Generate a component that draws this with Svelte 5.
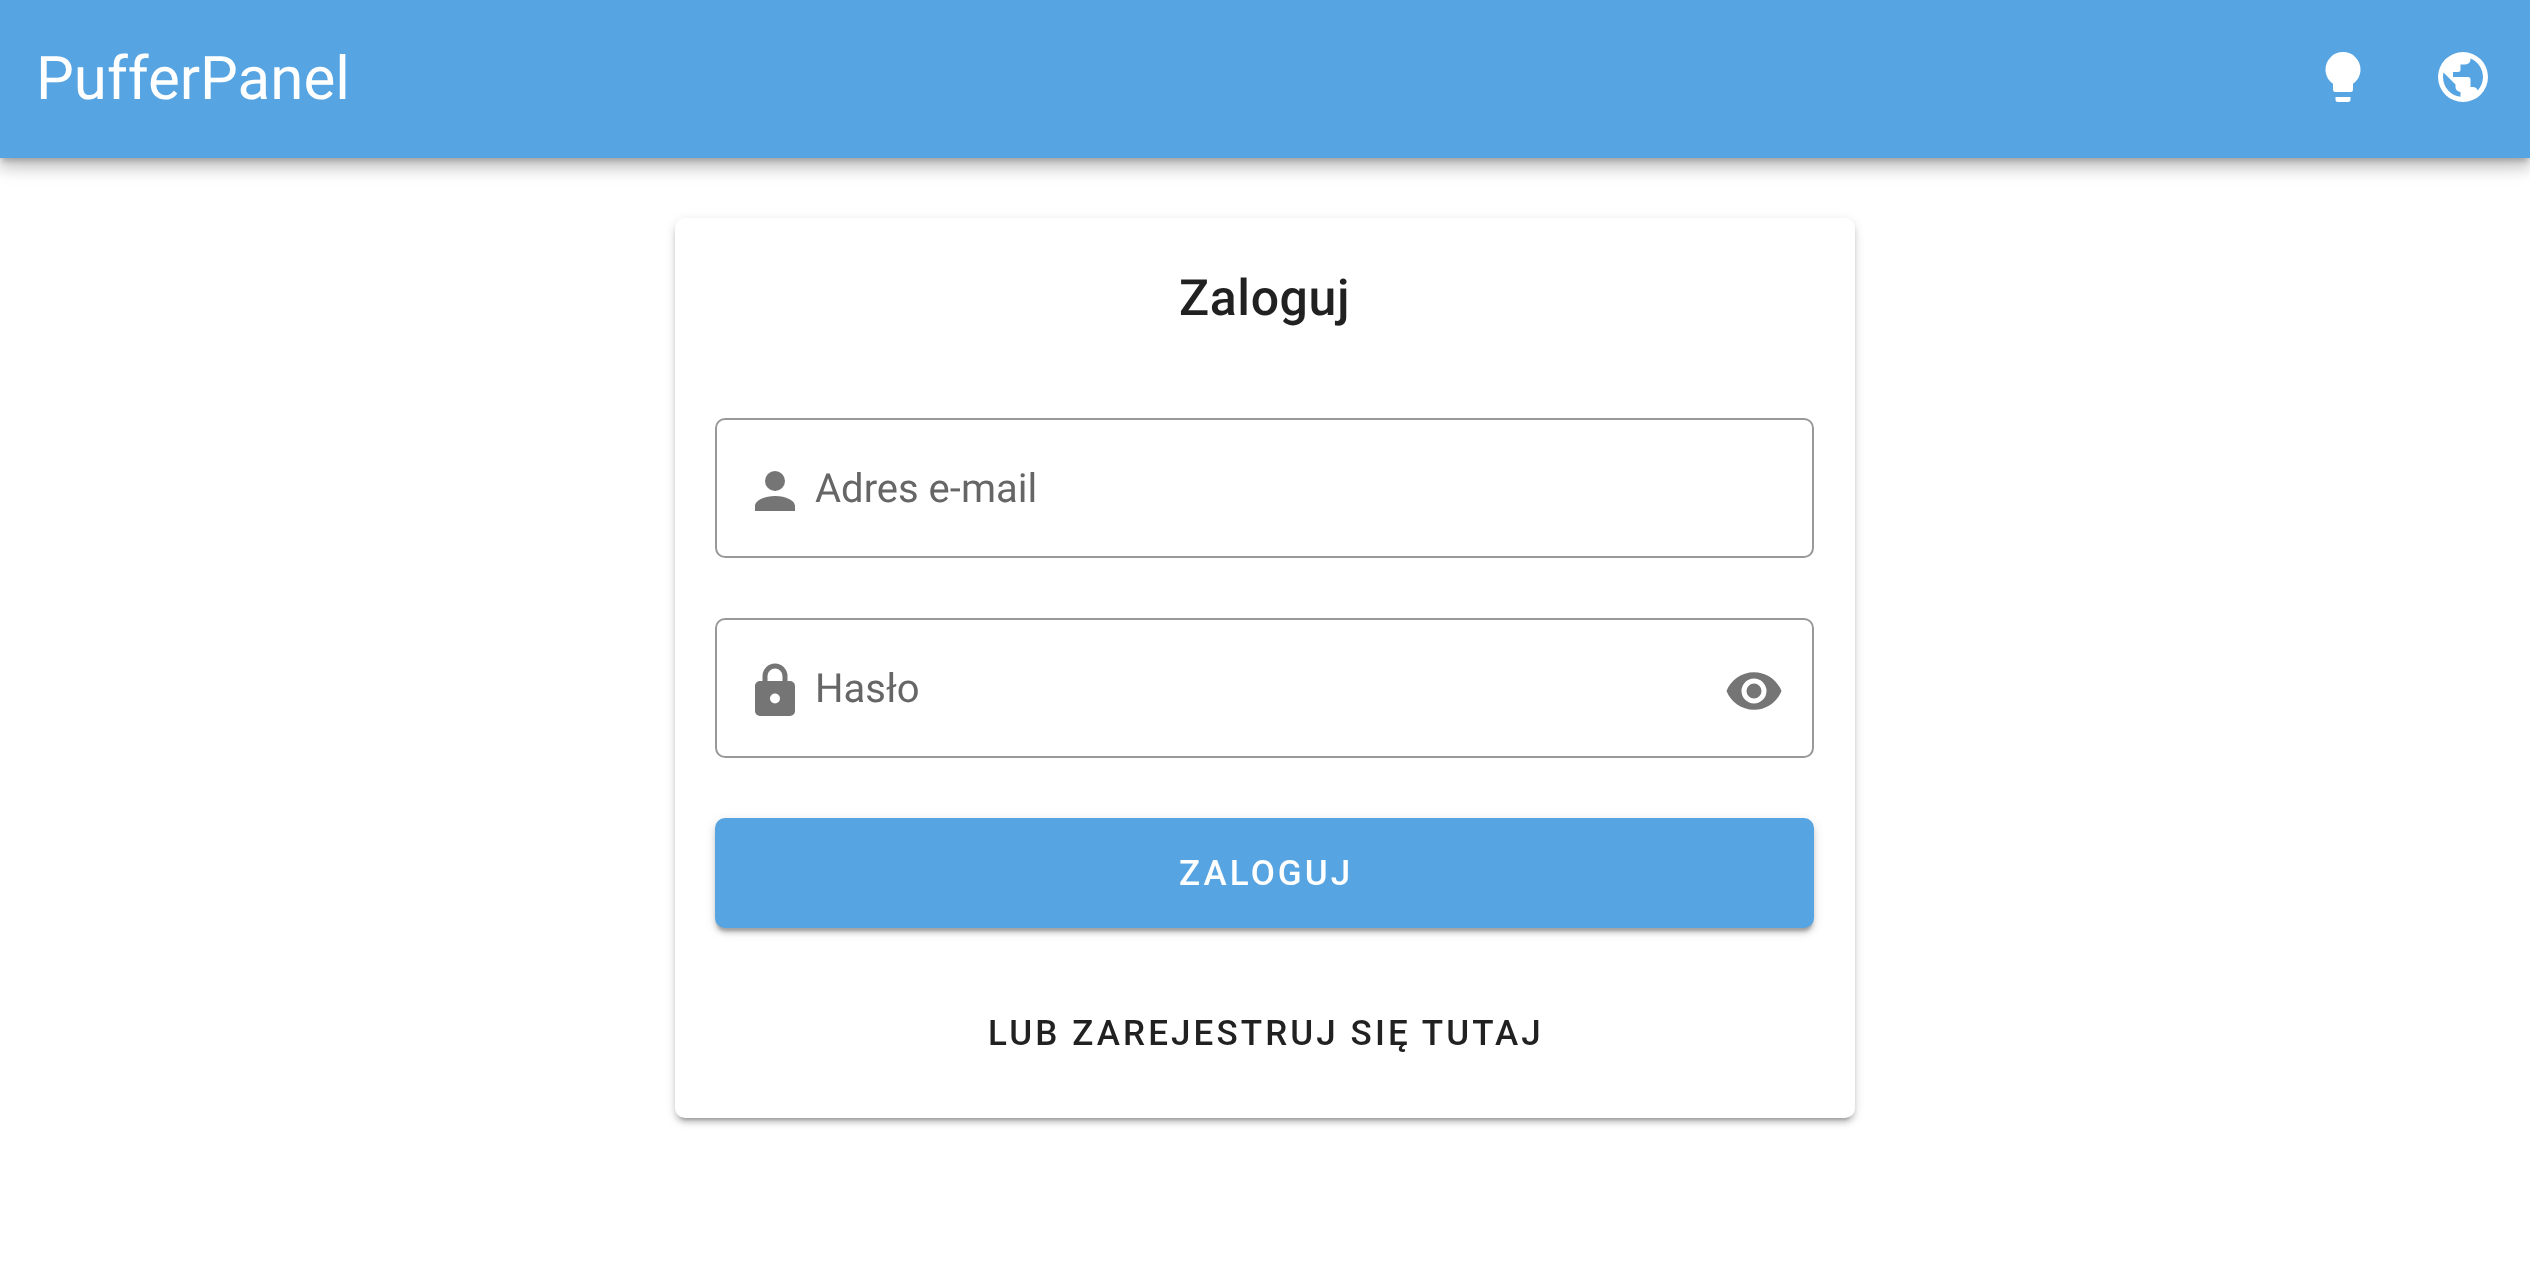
<script>
  const icons = {
    bulb: "M12,2A7,7 0 0,0 5,9C5,11.38 6.19,13.47 8,14.74V17A1,1 0 0,0 9,18H15A1,1 0 0,0 16,17V14.74C17.81,13.47 19,11.38 19,9A7,7 0 0,0 12,2M9,21A1,1 0 0,0 10,22H14A1,1 0 0,0 15,21V20H9V21Z",
    earth: "M17.9,17.39C17.64,16.59 16.89,16 16,16H15V13A1,1 0 0,0 14,12H8V10H10A1,1 0 0,0 11,9V7H13A2,2 0 0,0 15,5V4.59C17.93,5.77 20,8.64 20,12C20,14.08 19.2,15.97 17.9,17.39M11,19.93C7.05,19.44 4,16.08 4,12C4,11.38 4.08,10.78 4.21,10.21L9,15V16A2,2 0 0,0 11,18M12,2A10,10 0 0,0 2,12A10,10 0 0,0 12,22A10,10 0 0,0 22,12A10,10 0 0,0 12,2Z",
    account: "M12,4A4,4 0 0,1 16,8A4,4 0 0,1 12,12A4,4 0 0,1 8,8A4,4 0 0,1 12,4M12,14C16.42,14 20,15.79 20,18V20H4V18C4,15.79 7.58,14 12,14Z",
    lock: "M12,17A2,2 0 0,0 14,15C14,13.89 13.1,13 12,13A2,2 0 0,0 10,15A2,2 0 0,0 12,17M18,8A2,2 0 0,1 20,10V20A2,2 0 0,1 18,22H6A2,2 0 0,1 4,20V10C4,8.89 4.9,8 6,8H7V6A5,5 0 0,1 12,1A5,5 0 0,1 17,6V8H18M12,3A3,3 0 0,0 9,6V8H15V6A3,3 0 0,0 12,3Z",
    eye: "M12,9A3,3 0 0,0 9,12A3,3 0 0,0 12,15A3,3 0 0,0 15,12A3,3 0 0,0 12,9M12,17A5,5 0 0,1 7,12A5,5 0 0,1 12,7A5,5 0 0,1 17,12A5,5 0 0,1 12,17M12,4.5C7,4.5 2.73,7.61 1,12C2.73,16.39 7,19.5 12,19.5C17,19.5 21.27,16.39 23,12C21.27,7.61 17,4.5 12,4.5Z"
  };
</script>

<header class="bar">
  <div class="brand">PufferPanel</div>
  <div class="actions">
    <button class="icon-btn" aria-label="theme"><svg viewBox="0 0 24 24"><path d={icons.bulb} /></svg></button>
    <button class="icon-btn" aria-label="language"><svg viewBox="0 0 24 24"><path d={icons.earth} /></svg></button>
  </div>
</header>

<main class="page">
  <section class="card">
    <h1 class="title"><span class="txt">Zaloguj</span></h1>
    <div class="field">
      <svg class="ficon" viewBox="0 0 24 24"><path d={icons.account} /></svg>
      <span class="label txt">Adres e-mail</span>
    </div>
    <div class="field second">
      <svg class="ficon" viewBox="0 0 24 24"><path d={icons.lock} /></svg>
      <span class="label txt">Hasło</span>
      <svg class="ficon" viewBox="0 0 24 24"><path d={icons.eye} /></svg>
    </div>
    <button class="primary"><span class="txt">Zaloguj</span></button>
    <button class="text-btn"><span class="txt">Lub zarejestruj się tutaj</span></button>
  </section>
</main>

<style>
  :global(body) {
    margin: 0;
    background: #fff;
    font-family: Roboto, "Liberation Sans", sans-serif;
    text-rendering: geometricPrecision;
  }
  .txt { display: inline-block; will-change: transform; }
  .bar {
    height: 158px;
    background: #56a4e1;
    display: flex;
    align-items: center;
    justify-content: space-between;
    padding: 0 7px 0 36px;
    box-shadow: 0 5px 5px -2px rgba(0,0,0,.2), 0 10px 12px 1px rgba(0,0,0,.14), 0 3px 25px 2px rgba(0,0,0,.12);
    position: relative;
  }
  .brand {
    color: #fff;
    font-size: 60px;
    font-weight: 400;
    line-height: 1;
    will-change: transform;
  }
  .actions { display: flex; }
  .icon-btn {
    width: 120px;
    height: 120px;
    border: 0;
    padding: 0;
    background: none;
    display: flex;
    align-items: center;
    justify-content: center;
  }
  .icon-btn svg { width: 60px; height: 60px; fill: #fff; margin-top: -4px; }
  .page { padding: 60px 0 166px; }
  .card {
    width: 1180px;
    height: 900px;
    box-sizing: border-box;
    margin: 0 auto;
    padding: 0 41px 0 40px;
    background: #fff;
    border-radius: 10px;
    box-shadow: 0 7px 3px -5px rgba(0,0,0,.2), 0 5px 5px 0 rgba(0,0,0,.14), 0 3px 12px 0 rgba(0,0,0,.12);
    display: flex;
    flex-direction: column;
  }
  .title {
    margin: 0;
    height: 200px;
    padding-top: 41px;
    box-sizing: border-box;
    text-align: center;
    font-size: 50px;
    font-weight: 500;
    line-height: 80px;
    letter-spacing: .6px;
    color: rgba(0,0,0,.87);
  }
  .field {
    height: 140px;
    box-sizing: border-box;
    border: 2px solid #999;
    border-radius: 10px;
    display: flex;
    align-items: center;
    padding: 0 28px;
  }
  .second { margin-top: 60px; }
  .ficon { width: 60px; height: 60px; fill: #757575; flex: none; margin-top: 5px; }
  .label {
    margin-left: 10px;
    font-size: 40px;
    color: #666;
    flex: 1;
  }
  .primary {
    margin-top: 60px;
    height: 110px;
    border: 0;
    padding: 0 0 0 3px;
    border-radius: 10px;
    background: #56a4e1;
    color: #fff;
    font: 500 35px Roboto, sans-serif;
    letter-spacing: 3.1px;
    text-transform: uppercase;
    box-shadow: 0 5px 3px -2px rgba(0,0,0,.2), 0 5px 5px 0 rgba(0,0,0,.14), 0 3px 12px 0 rgba(0,0,0,.12);
  }
  .text-btn {
    margin-top: 50px;
    height: 110px;
    border: 0;
    padding: 0 0 0 3px;
    background: none;
    color: rgba(0,0,0,.87);
    font: 500 35px Roboto, sans-serif;
    letter-spacing: 3.1px;
    text-transform: uppercase;
  }
</style>
